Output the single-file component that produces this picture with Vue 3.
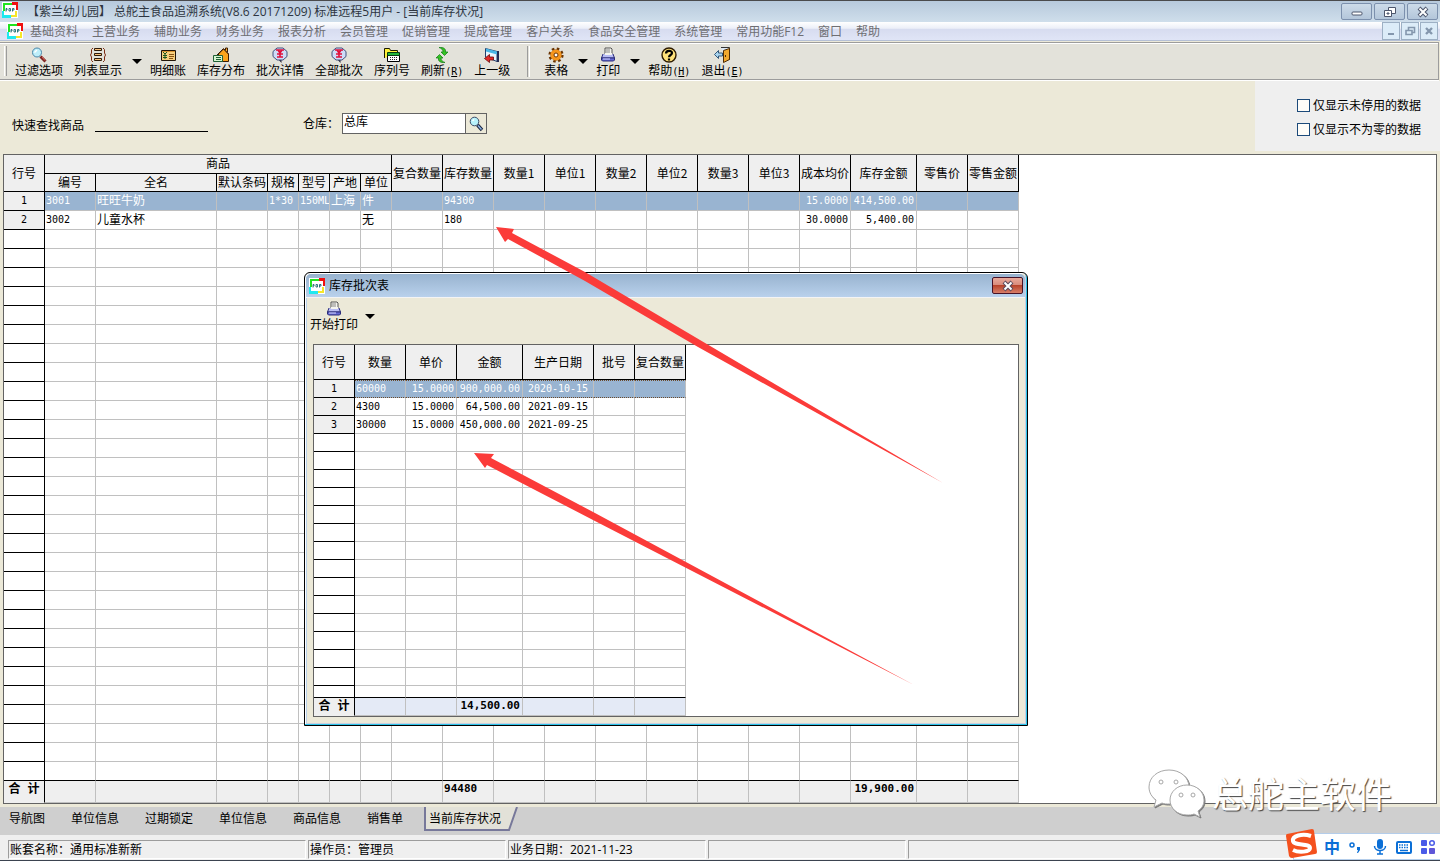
<script setup>
const menus = ['基础资料', '主营业务', '辅助业务', '财务业务', '报表分析', '会员管理', '促销管理', '提成管理', '客户关系', '食品安全管理', '系统管理', '常用功能F12', '窗口', '帮助']

const printer = '<path d="M5 1h6l1 1v6H5z" fill="#f4f4ee" stroke="#555"/><path d="M6 3h4M6 5h4" stroke="#888"/><path d="M3 7L1.500 11h13L13 7" fill="#b9bdf5" stroke="#2b2d7a"/><path d="M5 7h7" stroke="#f4f4ee" stroke-width="2"/><path d="M1.500 11h13v2l-1 1h-11l-1-1z" fill="#6468d4" stroke="#2b2d7a"/><path d="M3 12h7" stroke="#d5d8ff"/>'
const batch = '<path d="M6 12L9.500 16V12z" fill="#223"/><path d="M5 1h6l4 3.500v5L11 13H5L1 9.500v-5z" fill="#cfdcf8" stroke="#42507e"/><path d="M4 3h8M5 7h6M5 10h6M8 6v4M6 3l2 3 2-3" stroke="#e0103c" stroke-width="1.600" fill="none"/>'
const glass = '<path d="M9.500 9.500L14.500 14.500" stroke="#7b2222" stroke-width="3"/><path d="M11 10L14 13.500" stroke="#e06a5a"/><circle cx="6" cy="5.500" r="4.500" fill="#bdeefa" stroke="#4a86a8"/><path d="M3.500 5.500L6 3" stroke="#fff" stroke-width="1.500"/>'
const icons = {
  printer,
  batch,
  glass,
  find: '<path d="M9.500 9L14 14" stroke="#1a2540" stroke-width="3.400"/><path d="M10 9.500L13.500 13.500" stroke="#8fb6e8" stroke-width="1.400"/><circle cx="6.500" cy="5.500" r="4.300" fill="#b8f2fb" stroke="#3b4a66"/><path d="M4.500 5L6 3.500" stroke="#fff" stroke-width="1.500"/>',
  list: '<path d="M3 1L1.500 2.500V6L.5 8l1 2v3.500L3 15M13 1l1.500 1.500V6l1 2-1 2v3.500L13 15" fill="none" stroke="#7c2a12"/><path d="M4.500 1.500h7v2h-7zM4.500 6.500h7v2h-7zM4.500 11.500h7v2h-7z" fill="#fbc27c" stroke="#2e1a08"/>',
  ledger: '<path d="M1.500 3.500h14v10h-14z" fill="#f8cf7d" stroke="#201408"/><path d="M2 4h13v1H2z" fill="#d99433"/><path d="M3 5l2 2 2-2M3 8.500h4M3 10.500h4M5 7v5" stroke="#1e5a1e" fill="none"/><path d="M9 7.500h5M9 9.500h5M9 11.500h4" stroke="#8a5312"/>',
  house: '<path d="M5.500 14.500V7l5-5 5 5v7.500z" fill="#fba31c" stroke="#3a1c04"/><path d="M4 8l6.500-6.500L15.500 7" fill="none" stroke="#3a1c04"/><path d="M12.500 3V1h2v4" stroke="#3a1c04" fill="#fba31c"/><path d="M.5 8.500h9v6h-9z" fill="#d5f5d0" stroke="#1f5f35"/><path d="M3 10.500h5M3 12.500h5" stroke="#1f5f35"/>',
  serial: '<path d="M.5 11V1.500h5l1 2h7V7" fill="#fff13a" stroke="#1a1a00"/><path d="M3.500 7.500h12v7h-12z" fill="#fff" stroke="#000"/><path d="M3.500 5.500h12v3h-12z" fill="#21b53a" stroke="#053b10"/><path d="M6 10.500h8M6 12.500h8" stroke="#222" stroke-dasharray="1 1"/>',
  refresh: '<path d="M5 .5c5-.5 7 1.500 6.500 4.500H14l-3.500 3.500L7 5h2c0-2-1-3.500-4-4.500zM11 15.500c-5 .5-7-1.500-6.500-4.500H2l3.500-3.500L9 11H7c0 2 1 3.500 4 4.500z" fill="#35c324" stroke="#0f7a12" stroke-width=".7"/>',
  up: '<path d="M1.500 1.500L13 4.500v10L1.500 10z" fill="#e8f4fd" stroke="#23406e"/><path d="M2 1.500l11 3v3L2 4.500z" fill="#48b6e6"/><path d="M14 4v11" stroke="#222c55" stroke-width="2"/><path d="M.5 11.500l5-4v2.500h4v3h-4v2.500z" fill="#e32b2b" stroke="#6a0909" stroke-width=".8"/>',
  gear: '<circle cx="8" cy="8" r="5" fill="#f5951c" stroke="#6a3503"/><circle cx="8" cy="8" r="6.300" fill="none" stroke="#6a3503" stroke-width="2.600" stroke-dasharray="2.500 2.450"/><circle cx="8" cy="8" r="4.600" fill="none" stroke="#f5951c" stroke-width="2"/><circle cx="8" cy="8" r="2" fill="#fff" stroke="#6a3503"/>',
  help: '<circle cx="8" cy="8" r="7" fill="#ffe27a" stroke="#2c1a00" stroke-width="1.400"/><path d="M5 6.500C5 3 11 3 11 6c0 2-3 2-3 4.200M8 11.500v2" stroke="#000" stroke-width="2.200" fill="none"/>',
  exit: '<path d="M7 .5h8.500v12H12" fill="#dbe8f4" stroke="#333"/><path d="M9.500 3.500l6-2v11l-6 3z" fill="#f1a92f" stroke="#4d2b05"/><path d="M.5 7.500l4-4v2.500h4v3h-4v2.500z" fill="#a8d4ee" stroke="#24486e" stroke-width=".9"/><path d="M11.500 8v2" stroke="#4d2b05"/>',
  logo: '<path d="M0 0h16v16H0z" fill="#fff"/><path d="M1 1h9v2H3v6H1z" fill="#1fe41f"/><path d="M10 0h6v8h-2V3h-4z" fill="#f01010"/><path d="M0 9h2v4h7v3H0z" fill="#1fe8f0"/><path d="M9 13h4V9h2v6H9z" fill="#f5e62a"/><path d="M4 9.500V6.500h1v1.500H4M7 6.500v2.500h1.500V6.500zM10.500 9.500V6.500h1.500v1.500h-1.500" stroke="#1b6a70" stroke-width=".9" fill="none"/>'
}

const toolsA = [
  { t: '过滤选项', i: 'glass' },
  { t: '列表显示', i: 'list', more: true },
  { t: '明细账', i: 'ledger' },
  { t: '库存分布', i: 'house' },
  { t: '批次详情', i: 'batch' },
  { t: '全部批次', i: 'batch' },
  { t: '序列号', i: 'serial' },
  { t: '刷新', k: 'R', i: 'refresh' },
  { t: '上一级', i: 'up' }
]
const toolsB = [
  { t: '表格', i: 'gear', more: true },
  { t: '打印', i: 'printer', more: true },
  { t: '帮助', k: 'H', i: 'help' },
  { t: '退出', k: 'E', i: 'exit' }
]

const widths = [41, 51, 121, 51, 31, 31, 31, 31, 51, 51, 51, 51, 51, 51, 51, 51, 51, 66, 51, 51]
const subHeads = ['编号', '全名', '默认条码', '规格', '型号', '产地', '单位']
const heads = ['复合数量', '库存数量', '数量1', '单位1', '数量2', '单位2', '数量3', '单位3', '成本均价', '库存金额', '零售价', '零售金额']
const rows = [
  ['3001', '旺旺牛奶', '', '1*30', '150ML', '上海', '件', '', '94300', '', '', '', '', '', '', '15.0000', '414,500.00', '', ''],
  ['3002', '儿童水杯', '', '', '', '', '无', '', '180', '', '', '', '', '', '', '30.0000', '5,400.00', '', '']
]
const rightCols = [15, 16]
const textCols = [1, 5, 6]
const blank = Array(19).fill('')
while (rows.length < 31) rows.push(blank)
const totals = blank.map((_, i) => ({ 8: '94480', 16: '19,900.00' })[i] || '')

const bWidths = [41, 51, 51, 66, 71, 41, 51]
const bHeads = ['数量', '单价', '金额', '生产日期', '批号', '复合数量']
const bRows = [
  ['60000', '15.0000', '900,000.00', '2020-10-15', '', ''],
  ['4300', '15.0000', '64,500.00', '2021-09-15', '', ''],
  ['30000', '15.0000', '450,000.00', '2021-09-25', '', '']
]
while (bRows.length < 18) bRows.push(Array(6).fill(''))

const tabs = ['导航图', '单位信息', '过期锁定', '单位信息', '商品信息', '销售单']
</script>

<template>
  <div class="app">
    <header class="titlebar">
      <svg class="ico" viewBox="0 0 16 16" v-html="icons.logo"></svg>
      <h1>【紫兰幼儿园】 总舵主食品追溯系统(V8.6 20171209) 标准远程5用户 - [当前库存状况]</h1>
      <div class="winbtns">
        <button aria-label="最小化"><svg viewBox="0 0 16 12"><rect x="3" y="6" width="10" height="3" rx="1" fill="#fff" stroke="#4d566c" /></svg></button>
        <button aria-label="还原"><svg viewBox="0 0 16 12"><path d="M6.500 1.500h7v6h-7z" fill="#fff" stroke="#4d566c" /><path d="M2.500 4.500h7v6h-7z" fill="#fff" stroke="#4d566c" /><path d="M5 7h2v1H5z" fill="#9fb4cf" stroke="#4d566c" /></svg></button>
        <button aria-label="关闭"><svg viewBox="0 0 16 12"><path d="M4 2l8 8M12 2l-8 8" stroke="#4d566c" stroke-width="4" /><path d="M4.500 2.500l7 7M11.500 2.500l-7 7" stroke="#fff" stroke-width="2" /></svg></button>
      </div>
    </header>

    <nav class="menubar">
      <svg class="ico" viewBox="0 0 16 16" v-html="icons.logo"></svg>
      <button v-for="m in menus" :key="m" class="menu">{{ m }}</button>
      <div class="mdibtns">
        <button aria-label="最小化子窗口"><svg viewBox="0 0 16 16"><path d="M5 11h6" stroke="#8497ad" stroke-width="2" /></svg></button>
        <button aria-label="还原子窗口"><svg viewBox="0 0 16 16"><path d="M6.500 7V4.500h6v5H10M4 7.500h6v4H4z" fill="none" stroke="#8497ad" stroke-width="1.600" /></svg></button>
        <button aria-label="关闭子窗口"><svg viewBox="0 0 16 16"><path d="M5 5l6 6M11 5l-6 6" stroke="#8497ad" stroke-width="2.400" /></svg></button>
      </div>
    </nav>

    <div class="toolbar">
      <span class="grip"></span>
      <template v-for="t in toolsA" :key="t.t">
        <button class="tool"><svg class="ico" viewBox="0 0 16 16" v-html="icons[t.i]"></svg><span class="cap">{{ t.t }}<span v-if="t.k" class="key">(<u>{{ t.k }}</u>)</span></span></button>
        <button v-if="t.more" class="more" :aria-label="t.t + '选项'"></button>
      </template>
      <span class="sep"></span>
      <template v-for="t in toolsB" :key="t.t">
        <button class="tool"><svg class="ico" viewBox="0 0 16 16" v-html="icons[t.i]"></svg><span class="cap">{{ t.t }}<span v-if="t.k" class="key">(<u>{{ t.k }}</u>)</span></span></button>
        <button v-if="t.more" class="more" :aria-label="t.t + '选项'"></button>
      </template>
    </div>

    <section class="filters">
      <label for="quick">快速查找商品</label>
      <input id="quick" class="quick" type="text" />
      <label for="store" class="storelabel">仓库：</label>
      <div class="store">
        <input id="store" type="text" value="总库" />
        <button aria-label="查找仓库"><svg class="ico" viewBox="0 0 16 16" v-html="icons.find"></svg></button>
      </div>
      <div class="checks">
        <label><input type="checkbox" />仅显示未停用的数据</label>
        <label><input type="checkbox" />仅显示不为零的数据</label>
      </div>
    </section>

    <main class="grid">
      <table>
        <colgroup><col v-for="(w, i) in widths" :key="i" :style="{ width: w + 'px' }" /></colgroup>
        <thead>
          <tr class="h1">
            <th rowspan="2">行号</th>
            <th colspan="7" class="low">商品</th>
            <th v-for="h in heads" :key="h" rowspan="2">{{ h }}</th>
          </tr>
          <tr class="h2"><th v-for="h in subHeads" :key="h" class="low">{{ h }}</th></tr>
        </thead>
        <tbody>
          <tr v-for="(r, i) in rows" :key="i" :class="{ sel: i === 0 }">
            <th :class="{ blank: i > 1 }">{{ i < 2 ? i + 1 : '' }}</th>
            <td v-for="(c, j) in r" :key="j" :class="{ r: rightCols.includes(j), cjk: textCols.includes(j) }">{{ c }}</td>
          </tr>
        </tbody>
        <tfoot>
          <tr><th>合 计</th><td v-for="(c, j) in totals" :key="j" :class="{ r: j === 16 }">{{ c }}</td></tr>
        </tfoot>
      </table>
    </main>

    <nav class="tabs">
      <button v-for="(t, i) in tabs" :key="i">{{ t }}</button>
      <button class="active">
        <svg viewBox="0 0 94 24" preserveAspectRatio="none"><path d="M1 0V23H85L93 0" fill="#e2e1d8" stroke="#77789a" stroke-width="2" /></svg>
        <span>当前库存状况</span>
      </button>
    </nav>

    <footer class="status">
      <span class="w1">账套名称：通用标准新新</span>
      <span>操作员：管理员</span>
      <span>业务日期：2021-11-23</span>
      <span></span>
      <span class="last"></span>
    </footer>

    <section class="dialog" role="dialog" aria-labelledby="dlg">
      <header>
        <svg class="ico" viewBox="0 0 16 16" v-html="icons.logo"></svg>
        <h2 id="dlg">库存批次表</h2>
        <button class="close" aria-label="关闭"><svg viewBox="0 0 16 12"><path d="M4 2l8 8M12 2l-8 8" stroke="#5a4a5c" stroke-width="4" /><path d="M4.500 2.500l7 7M11.500 2.500l-7 7" stroke="#fff" stroke-width="2" /></svg></button>
      </header>
      <div class="dlgbody">
        <div class="dlgtools">
          <button class="tool"><svg class="ico" viewBox="0 0 16 16" v-html="icons.printer"></svg><span class="cap">开始打印</span></button>
          <button class="more" aria-label="打印选项"></button>
        </div>
        <div class="batch">
          <table>
            <colgroup><col v-for="(w, i) in bWidths" :key="i" :style="{ width: w + 'px' }" /></colgroup>
            <thead><tr><th>行号</th><th v-for="h in bHeads" :key="h">{{ h }}</th></tr></thead>
            <tbody>
              <tr v-for="(r, i) in bRows" :key="i" :class="{ sel: i === 0, part: i === 17 }">
                <th :class="{ blank: i > 2 }">{{ i < 3 ? i + 1 : '' }}</th>
                <td v-for="(c, j) in r" :key="j" :class="{ r: j === 1 || j === 2, c: j === 3 }">{{ c }}</td>
              </tr>
            </tbody>
            <tfoot><tr><th>合 计</th><td></td><td></td><td class="r">14,500.00</td><td></td><td></td><td></td></tr></tfoot>
          </table>
        </div>
      </div>
    </section>

    <svg class="arrows" width="1440" height="861" viewBox="0 0 1440 861" aria-hidden="true">
      <path d="M496 227L514 229L512 233L585 272L700 340L943 483L698 347L585 281L508 239L505 242Z" />
      <path d="M474 453L494 454L491 458L595 513L914 685L593 520L487 465L485 468Z" />
    </svg>

    <div class="mark">
      <svg viewBox="0 0 58 50" width="58" height="50">
        <g fill="#fff" stroke="#a8a8a8" stroke-width="1">
          <path d="M21 1C10 1 1 8 1 18c0 6 3 10 7 13l-2 7 8-4c2 1 5 1 7 1 11 0 20-7 20-17S32 1 21 1z" />
          <path d="M39 16c-10 0-17 7-17 15s7 15 17 15c2 0 5 0 7-1l6 3-2-6c4-3 6-6 6-11 0-8-7-15-17-15z" />
          <circle cx="13" cy="13" r="2" /><circle cx="28" cy="13" r="2" /><circle cx="33" cy="26" r="2" /><circle cx="45" cy="26" r="2" />
        </g>
      </svg>
      <span>总舵主软件</span>
    </div>

    <div class="ime">
      <svg class="sogou" viewBox="0 0 32 32"><path d="M1 6L26 1Q28 1 28 3L31 24Q31 26 29 26L6 30Q4 30 3 28L0 8Q0 6 1 6z" fill="#f4511e" /><path d="M25 8C16 5 6 8 7 13c1 5 17 2 17 7 0 4-11 5-17 2" fill="none" stroke="#fff" stroke-width="4" /></svg>
      <b>中</b>
      <svg viewBox="0 0 16 16"><circle cx="4" cy="6" r="2" fill="none" stroke="#0b6fd6" stroke-width="1.500" /><path d="M9 8h3v3l-2 3H9l1-3H9z" fill="#0b6fd6" /></svg>
      <svg viewBox="0 0 16 16"><rect x="5" y="0" width="6" height="10" rx="3" fill="#0b6fd6" /><path d="M2.500 7c0 6 11 6 11 0M8 12v3M5 15h6" fill="none" stroke="#0b6fd6" stroke-width="1.500" /></svg>
      <svg viewBox="0 0 16 16"><rect x="1" y="3" width="14" height="11" rx="1" fill="#fff" stroke="#0b6fd6" stroke-width="2" /><path d="M3 6h10M3 8.500h10" stroke="#0b6fd6" stroke-width="1.500" stroke-dasharray="1.500 1" /><path d="M4 11.500h8" stroke="#0b6fd6" stroke-width="1.500" /></svg>
      <svg viewBox="0 0 16 16"><rect x="1" y="1" width="6" height="6" rx="1" fill="#4a5be8" /><circle cx="12" cy="4" r="2.300" fill="none" stroke="#4a5be8" stroke-width="1.500" /><rect x="1" y="9" width="6" height="6" rx="1" fill="#4a5be8" /><rect x="9" y="9" width="6" height="6" rx="1" fill="#5f56d8" /></svg>
    </div>
  </div>
</template>

<style>
body {
  margin: 0;
  background: #ece9d8;
}
</style>

<style scoped>
.app {
  position: relative;
  display: flex;
  flex-direction: column;
  min-height: 100vh;
  box-sizing: border-box;
  border-top: 1px solid #4a4a4c;
  border-bottom: 1px solid #3b4350;
  overflow: hidden;
  background: #ece9d8;
  color: #000;
  font: 12px/14px "Noto Sans CJK SC", sans-serif;
}
button,
input {
  font: inherit;
  color: inherit;
  margin: 0;
  padding: 0;
  border: 0;
  background: none;
}
.ico {
  width: 16px;
  height: 16px;
  flex: none;
}
h1,
h2 {
  margin: 0;
  font: 12px/18px "Open Sans", "Noto Sans CJK SC", sans-serif;
  white-space: pre;
}
.titlebar {
  display: flex;
  align-items: center;
  gap: 9px;
  height: 21px;
  padding: 0 2px;
  background: linear-gradient(#b7c9dc, #cfdeeb);
  color: #2d3540;
}
.titlebar .ico {
  margin-bottom: 4px;
}
.winbtns {
  display: flex;
  gap: 2px;
  margin-left: auto;
}
.winbtns button {
  display: grid;
  place-items: center;
  width: 31px;
  height: 17px;
  box-sizing: border-box;
  border: 1px solid #7c90ad;
  border-radius: 2px;
  background: linear-gradient(#cddbe9, #b3c6da);
}
.winbtns svg,
.close svg {
  width: 16px;
  height: 12px;
}
.menubar {
  display: flex;
  align-items: center;
  gap: 14px;
  height: 18px;
  padding: 0 2px 0 7px;
  border-bottom: 1px solid #b5c0d6;
  background: linear-gradient(#fff 0, #eceff8 35%, #d7dcf0 40%, #e0e5f6 100%);
  color: #6e6e72;
  font-family: "Open Sans", "Noto Sans CJK SC", sans-serif;
}
.menubar .menu {
  padding-top: 1px;
}
.menubar .ico {
  margin-right: -7px;
}
.mdibtns {
  display: flex;
  gap: 1px;
  margin-left: auto;
}
.mdibtns button {
  width: 18px;
  height: 18px;
  box-sizing: border-box;
  border: 1px solid #9db0c4;
  background: #dcecf8;
}
.mdibtns svg {
  display: block;
  width: 16px;
  height: 16px;
}
.toolbar {
  display: flex;
  align-items: center;
  height: 36px;
  margin: 1px 1px 0 0;
  border: 1px solid #9c9c9c;
  border-left: 0;
  box-shadow: 0 1px #fff, inset 0 1px #fff;
  background: #e3e2da;
}
.grip {
  width: 1px;
  height: 30px;
  margin: 0 2px 0 4px;
  border-left: 1px solid #fff;
  border-right: 1px solid #9c9c9c;
}
.tool {
  display: flex;
  flex-direction: column;
  align-items: center;
  padding: 1px 5px 0 6px;
  white-space: nowrap;
}
.cap {
  display: block;
  height: 14px;
  line-height: 14px;
}
.key {
  font-family: "DejaVu Sans Mono", monospace;
  font-size: 10px;
  line-height: 10px;
}
.more {
  width: 17px;
  height: 30px;
  padding-left: 2px;
}
.more::after {
  content: "";
  display: block;
  width: 0;
  margin: 0 auto;
  border: 5px solid transparent;
  border-top-color: #000;
  border-bottom: 0;
}
.sep {
  width: 1px;
  height: 31px;
  margin: 0 8px 0 12px;
  border-left: 1px solid #9c9c9c;
  border-right: 1px solid #fff;
}
.filters {
  display: flex;
  align-items: flex-start;
  height: 70px;
  margin-top: 1px;
  padding: 0 0 3px 12px;
}
.filters > label {
  margin-top: 37px;
}
.quick {
  width: 113px;
  height: 18px;
  margin: 32px 95px 0 11px;
  border-bottom: 1px solid #000;
}
.filters > .storelabel {
  margin-top: 35px;
}
.store {
  display: flex;
  align-items: flex-start;
  height: 19px;
  margin: 32px 0 0 3px;
  border: 1px solid #636363;
  background: #fff;
}
.store input {
  width: 121px;
  height: 14px;
  padding-left: 1px;
}
.store button {
  width: 21px;
  height: 19px;
  border-left: 1px solid #636363;
  background: #ece9d8;
}
.store .ico {
  display: block;
  margin: 1px auto 0;
}
.checks {
  display: flex;
  flex-direction: column;
  gap: 10px;
  width: 143px;
  height: 53px;
  margin-left: auto;
  padding: 17px 0 0 42px;
  background: #efefef;
}
.checks label {
  display: flex;
  align-items: center;
  gap: 3px;
  white-space: nowrap;
}
.checks input {
  appearance: none;
  width: 13px;
  height: 13px;
  box-sizing: border-box;
  border: 1px solid #1c4a7a;
  background: #fffdf8;
}
.grid {
  flex: 1;
  margin: 0 3px 3px;
  border: 1px solid #636363;
  background: #fff;
}
table {
  table-layout: fixed;
  width: 0;
  border-collapse: separate;
  border-spacing: 0;
}
th,
td {
  box-sizing: border-box;
  overflow: hidden;
  padding: 0;
  border-right: 1px solid #c0c0c0;
  border-bottom: 1px solid #c0c0c0;
  font-weight: 400;
  line-height: 16px;
  white-space: nowrap;
}
td {
  padding: 0 2px 0 1px;
  font-family: "DejaVu Sans Mono", "Noto Sans CJK SC", monospace;
  font-size: 10px;
}
td.r {
  text-align: right;
}
td.c {
  padding: 0;
  text-align: center;
}
td.cjk {
  padding-right: 0;
  font-size: 12px;
}
thead th,
tbody th,
tfoot th {
  border-color: #000;
  background: #efefef;
}
thead .low {
  padding-bottom: 2px;
  line-height: 14px;
}
tbody th {
  font-family: "DejaVu Sans Mono", monospace;
  font-size: 10px;
}
tbody th.blank {
  background: #fff;
}
.sel td {
  background: #99b4d1;
  color: #fff;
}
.grid .h1 th {
  height: 19px;
}
.grid .h2 th {
  height: 18px;
}
.grid tbody tr {
  height: 19px;
}
.grid tbody tr:last-child td,
.batch tbody tr:last-child td {
  border-bottom-color: #000;
}
.grid tfoot tr {
  height: 22px;
}
tfoot td,
tfoot th {
  background: #efefef;
  font-weight: 700;
  vertical-align: top;
}
tfoot td {
  font-size: 11px;
}
tfoot th {
  border-bottom-color: #efefef;
  font-family: "DejaVu Sans Mono", "Noto Sans CJK SC", monospace;
}
.tabs {
  display: flex;
  gap: 26px;
  height: 28px;
  padding-left: 9px;
  background: #cfcfcf;
}
.tabs button {
  height: 22px;
}
.tabs .active {
  position: relative;
  width: 94px;
  height: 24px;
  margin-left: -5px;
  padding: 0 0 2px 5px;
  text-align: left;
}
.active svg {
  position: absolute;
  inset: 0;
  width: 100%;
  height: 100%;
}
.active span {
  position: relative;
}
.status {
  display: flex;
  gap: 2px;
  height: 20px;
  padding: 5px 0 0 8px;
  background: #efefef;
}
.status span {
  width: 195px;
  height: 17px;
  padding-left: 1px;
  border: 1px solid #fff;
  border-top-color: #9c9c9c;
  border-left-color: #9c9c9c;
  font: 12px/17px "Open Sans", "Noto Sans CJK SC", sans-serif;
  white-space: nowrap;
}
.status .w1 {
  width: 295px;
}
.status .last {
  flex: 1;
}
.dialog {
  position: absolute;
  left: 304px;
  top: 271px;
  width: 724px;
  box-sizing: border-box;
  border: 1px solid #000;
  border-radius: 6px 6px 0 0;
  background: #ece9d8;
  box-shadow: inset -1px -1px #2cc4ea, inset 1px 1px #fff, inset -2px -2px #c6cfe2, inset 2px 0 #b9d1ea;
}
.dialog header {
  display: flex;
  align-items: center;
  gap: 4px;
  height: 23px;
  margin: 1px 2px 0 1px;
  padding: 0 2px 0 3px;
  border-bottom: 1px solid #f4f4f4;
  border-radius: 5px 5px 0 0;
  background: linear-gradient(#98b3cf, #b9d1ec);
}
.close {
  display: grid;
  place-items: center;
  width: 31px;
  height: 17px;
  margin-left: auto;
  border: 1px solid #471226;
  border-radius: 2px;
  background: linear-gradient(#e9a99b 0, #d98c7c 45%, #b8432a 50%, #d77e68 100%);
}
.dlgbody {
  padding: 3px 8px 8px;
}
.dlgtools {
  display: flex;
  height: 43px;
  margin-left: -9px;
}
.dlgtools .tool {
  align-self: flex-start;
  padding-top: 0;
}
.dlgtools .more {
  width: 12px;
}
.batch {
  border: 1px solid #636363;
  background: #fff;
}
.batch thead tr {
  height: 35px;
}
.batch tbody tr {
  height: 18px;
}
.batch tbody .part {
  height: 12px;
}
.batch .part td,
.batch .part th {
  line-height: 10px;
}
.batch tfoot tr {
  height: 18px;
}
.batch tfoot td {
  background: #e4eaf6;
}
.batch .sel td {
  border-top: 1px dotted #6b4a2c;
  border-bottom: 1px dotted #6b4a2c;
  line-height: 14px;
}
.arrows {
  position: absolute;
  left: 0;
  top: -1px;
  fill: #fb3b39;
  pointer-events: none;
}
.mark {
  position: absolute;
  right: 48px;
  bottom: 40px;
  display: flex;
  align-items: center;
  gap: 6px;
  color: #fff;
  font-size: 36px;
  font-weight: 400;
  line-height: 48px;
  text-shadow: 1px 1px 1px #444;
  pointer-events: none;
}
.mark svg {
  filter: drop-shadow(1px 1px 0 #777);
}
.mark span {
  padding-bottom: 4px;
}
.ime {
  position: absolute;
  right: 0;
  bottom: 0;
  display: flex;
  align-items: center;
  gap: 8px;
  height: 25px;
  padding-right: 4px;
  border: 1px solid #b4cdea;
  border-right: 0;
  background: #fff;
  color: #0b6fd6;
}
.ime b {
  font-size: 16px;
  line-height: 22px;
  padding-bottom: 2px;
}
.ime svg {
  width: 16px;
  height: 16px;
}
.ime .sogou {
  width: 32px;
  height: 32px;
  margin: -5px -2px 0 -8px;
}
</style>
